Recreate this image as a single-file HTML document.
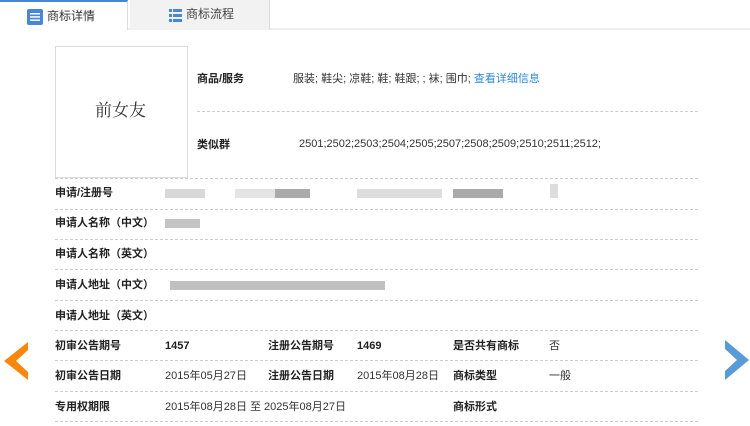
<!DOCTYPE html>
<html><head><meta charset="utf-8"><style>
*{margin:0;padding:0;box-sizing:border-box}
body{width:750px;height:426px;background:#fff;position:relative;overflow:hidden;font-family:"Liberation Sans","Microsoft YaHei","Noto Sans CJK SC",sans-serif;font-size:11px;color:#333}
.a{position:absolute;white-space:nowrap;line-height:15px}
.b{font-weight:bold;color:#222}
.l{position:absolute;left:55px;width:643px;border-top:1px dashed #ccc;height:0}
.bl{position:absolute;background:#c8c8c8;height:9px}
</style></head><body>
<div class="a" style="left:0;top:0;width:750px;height:30px;background:#fff;border-bottom:2px solid #eee"></div>
<div class="a" style="left:0;top:0;width:128px;height:30px;background:#fff;border-top:2px solid #4a86d8;border-right:1px solid #ddd"></div>
<div class="a" style="left:130px;top:0;width:140px;height:30px;background:#f2f2f2;border-right:1px solid #ddd"></div>
<svg class="a" style="left:27px;top:9px" width="16" height="16"><rect x="0" y="0" width="16" height="16" rx="2" fill="#4a86d8"/><rect x="3" y="4" width="10" height="1.5" fill="#fff"/><rect x="3" y="7.2" width="10" height="1.5" fill="#fff"/><rect x="3" y="10.4" width="10" height="1.5" fill="#fff"/></svg>
<div class="a" style="left:47px;top:9px;font-size:12px;color:#333">商标详情</div>
<svg class="a" style="left:169px;top:9px" width="13" height="13"><g fill="#4a86d8"><rect x="0" y="0" width="3" height="3"/><rect x="4" y="0" width="9" height="3"/><rect x="0" y="5" width="3" height="3"/><rect x="4" y="5" width="9" height="3"/><rect x="0" y="10" width="3" height="3"/><rect x="4" y="10" width="9" height="3"/></g></svg>
<div class="a" style="left:186px;top:7px;font-size:12px;color:#444">商标流程</div>

<div class="a" style="left:55px;top:46px;width:133px;height:132px;border:1px solid #ddd"></div>
<div class="a" style="left:95px;top:101px;font-size:17px;line-height:20px;color:#333;font-family:'Liberation Serif','Noto Serif CJK SC',serif">前女友</div>

<div class="a b" style="left:197px;top:72px">商品/服务</div>
<div class="a" style="left:293px;top:72px">服装; 鞋尖; 凉鞋; 鞋; 鞋跟; ; 袜; 围巾; <span style="color:#2f8ad8">查看详细信息</span></div>
<div class="l" style="left:197px;width:501px;top:111px"></div>
<div class="a b" style="left:197px;top:138px">类似群</div>
<div class="a" style="left:299px;top:137px">2501;2502;2503;2504;2505;2507;2508;2509;2510;2511;2512;</div>
<div class="l" style="top:178px"></div>

<div class="a b" style="left:55px;top:186px">申请/注册号</div>
<div class="bl" style="left:165px;top:189px;width:40px;background:#d8d8d8"></div>
<div class="bl" style="left:235px;top:189px;width:40px;background:#e4e4e4"></div>
<div class="bl" style="left:275px;top:189px;width:35px;background:#aaa"></div>
<div class="bl" style="left:357px;top:189px;width:85px;background:#ddd"></div>
<div class="bl" style="left:453px;top:189px;width:50px;background:#aaa"></div>
<div class="bl" style="left:550px;top:184px;width:8px;height:14px;background:#ddd"></div>
<div class="l" style="top:209px"></div>
<div class="a b" style="left:55px;top:216px">申请人名称（中文）</div>
<div class="bl" style="left:165px;top:219px;width:35px;background:#c4c4c4"></div>
<div class="l" style="top:239px"></div>
<div class="a b" style="left:55px;top:247px">申请人名称（英文）</div>
<div class="l" style="top:269px"></div>
<div class="a b" style="left:55px;top:278px">申请人地址（中文）</div>
<div class="bl" style="left:170px;top:281px;width:215px;background:#c0c0c0"></div>
<div class="l" style="top:300px"></div>
<div class="a b" style="left:55px;top:309px">申请人地址（英文）</div>
<div class="l" style="top:330px"></div>
<div class="a b" style="left:55px;top:339px">初审公告期号</div>
<div class="a b" style="left:165px;top:339px">1457</div>
<div class="a b" style="left:268px;top:339px">注册公告期号</div>
<div class="a b" style="left:357px;top:339px">1469</div>
<div class="a b" style="left:453px;top:339px">是否共有商标</div>
<div class="a" style="left:549px;top:339px">否</div>
<div class="l" style="top:360px"></div>
<div class="a b" style="left:55px;top:369px">初审公告日期</div>
<div class="a" style="left:165px;top:369px">2015年05月27日</div>
<div class="a b" style="left:268px;top:369px">注册公告日期</div>
<div class="a" style="left:357px;top:369px">2015年08月28日</div>
<div class="a b" style="left:453px;top:369px">商标类型</div>
<div class="a" style="left:549px;top:369px">一般</div>
<div class="l" style="top:391px"></div>
<div class="a b" style="left:55px;top:400px">专用权期限</div>
<div class="a" style="left:165px;top:400px">2015年08月28日 至 2025年08月27日</div>
<div class="a b" style="left:453px;top:400px">商标形式</div>
<div class="l" style="top:421px"></div>

<svg class="a" style="left:4px;top:342px" width="26" height="38"><polygon points="24,0 0,19 24,38 24,30 12,19 24,8" fill="#f7880d"/></svg>
<svg class="a" style="left:723px;top:340px" width="26" height="40"><polygon points="2,0 26,20 2,40 2,31 14,20 2,9" fill="#5b9bd5"/></svg>
</body></html>
